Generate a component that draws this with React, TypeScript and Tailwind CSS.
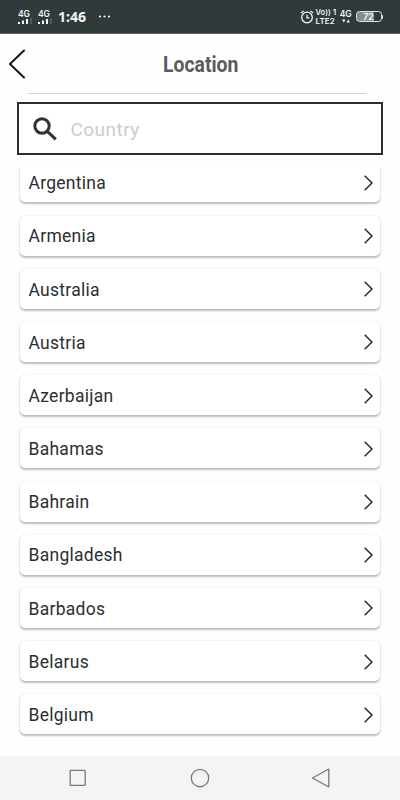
import { useState } from 'react'

const countries = [
  'Argentina',
  'Armenia',
  'Australia',
  'Austria',
  'Azerbaijan',
  'Bahamas',
  'Bahrain',
  'Bangladesh',
  'Barbados',
  'Belarus',
  'Belgium',
]

function Signal() {
  return (
    <div className="flex w-[16px] flex-col items-start">
      <span className="pl-[1px] font-[Inter,sans-serif] text-[8.5px] leading-[8px] font-semibold tracking-[-0.2px]">4G</span>
      <svg className="h-[6px] w-[16px]" viewBox="0 0 16 6" fill="currentColor">
        <rect x="1" y="4" width="2" height="2" />
        <rect x="5" y="2.5" width="2" height="3.5" />
        <rect x="9" y="1" width="2" height="5" />
        <rect x="13.2" y="0" width="1.6" height="6" fill="#596163" />
      </svg>
    </div>
  )
}

function StatusBar() {
  return (
    <div className="flex h-[34px] shrink-0 items-center border-b border-[#5c6366] bg-[#303a3b] pr-[17px] pl-[17px] text-[#f4f6f6]">
      <Signal />
      <div className="ml-[4px]">
        <Signal />
      </div>
      <span className="ml-[5px] w-[29px] font-['Noto_Sans',sans-serif] text-[14px] leading-none font-bold">
        1:46
      </span>
      <svg className="ml-[11px] h-[3px] w-[13px]" viewBox="0 0 13 3" fill="currentColor">
        <circle cx="2" cy="1.5" r="1.1" />
        <circle cx="6.5" cy="1.5" r="1.1" />
        <circle cx="11" cy="1.5" r="1.1" />
      </svg>

      <div className="ml-auto flex items-center font-[Inter,sans-serif] font-semibold">
        {/* Alarm */}
        <svg className="h-[14px] w-[14px]" viewBox="0 0 14 14" fill="none" stroke="currentColor" strokeWidth="1.3">
          <circle cx="7" cy="7.5" r="5.3" />
          <path d="M7 4.8v3h2.4M.8 3 3.6 1M13.2 3 10.4 1" />
        </svg>
        <div className="ml-[2px] flex w-[21px] flex-col whitespace-nowrap">
          <span className="text-[7.5px] leading-[8px] tracking-[0.1px]">Vo)) 1</span>
          <span className="text-[8px] leading-[8px] tracking-[0.1px]">LTE2</span>
        </div>
        <div className="ml-[3px] flex w-3 flex-col items-center">
          <span className="text-[8.5px] leading-[8px] tracking-[-0.2px]">4G</span>
          <svg className="mt-px h-[4px] w-2" viewBox="0 0 8 4" fill="currentColor">
            <path d="M0 .4h3.6L1.8 3.6zM4.4 3.6H8L6.2.4z" />
          </svg>
        </div>
        <div className="ml-[4px] flex h-[11px] w-[26px] items-center justify-center rounded-[3.5px] border border-[#dfe3e3] bg-linear-to-r from-[#848c8d] from-70% to-[#303a3b] to-70% pt-px text-[8.5px] leading-none font-bold">
          72
        </div>
        <div className="h-[4px] w-[1.5px] rounded-r-full bg-[#dfe3e3]" />
      </div>
    </div>
  )
}

function Header() {
  return (
    <div className="mx-[9px] flex h-[60px] shrink-0 items-center">
      <button aria-label="Back" className="w-4">
        <svg className="h-[30px] w-4" viewBox="0 0 16 30" fill="none" stroke="#151719" strokeWidth="2" strokeLinecap="round">
          <path d="M15 1.5.9 15 15 28.5" />
        </svg>
      </button>
      <h1 className="flex-1 scale-x-[0.86] pr-[17px] text-center text-[22.5px] leading-none font-bold text-[#5b5b5b]">
        Location
      </h1>
    </div>
  )
}

function CountryRow({ name }: { name: string }) {
  return (
    <li className="flex h-10 shrink-0 items-center rounded-[5px] bg-white pr-[7px] pl-[8.5px] shadow-[0_1.5px_2px_rgba(0,0,0,0.25),0_0_1.5px_rgba(0,0,0,0.12)]">
      <span className="flex-1 pt-[3px] text-[17.5px] leading-none tracking-[0.27px] text-[#2b2f31]">{name}</span>
      <svg className="mt-px h-4 w-[9px]" viewBox="0 0 9 16" fill="none" stroke="#202325" strokeWidth="1.4">
        <path d="M.7.8 8 8 .7 15.2" />
      </svg>
    </li>
  )
}

function NavBar() {
  return (
    <div className="flex h-[44px] shrink-0 items-center bg-[#f4f4f4] px-[68px]">
      <svg className="h-[20px] w-full" viewBox="0 0 264 20" fill="none" stroke="#77797a" strokeWidth="1.3" strokeLinejoin="round">
        <rect x="2.2" y="2.4" width="15" height="15" rx=".5" />
        <circle cx="132" cy="10" r="8.7" />
        <path d="M260.8 1 244.5 10l16.3 9z" />
      </svg>
    </div>
  )
}

export default function App() {
  const [query, setQuery] = useState('')
  const filtered = countries.filter((c) => c.toLowerCase().startsWith(query.toLowerCase()))

  return (
    <div className="flex h-[800px] w-[400px] flex-col overflow-hidden bg-[#fefefe] font-[Roboto,sans-serif]">
      <StatusBar />
      <Header />
      <div className="-mt-px mr-[33px] ml-7 h-px shrink-0 bg-[#d4d4d4]" />

      {/* Search */}
      <label className="mx-[17px] mt-2 flex h-[53px] shrink-0 items-center border-2 border-[#263033] bg-white pl-[14px]">
        <svg className="h-6 w-6" viewBox="0 0 24 24" fill="none" stroke="#2b3335" strokeWidth="3">
          <circle cx="9" cy="9" r="7.2" />
          <path d="m14 14.2 8.8 8.2" />
        </svg>
        <input
          type="text"
          placeholder="Country"
          value={query}
          onChange={(e) => setQuery(e.target.value)}
          className="ml-[13.5px] w-[260px] pt-[3px] text-[19px] tracking-[0.45px] outline-none placeholder:text-[#cccccc]"
        />
      </label>

      {/* Country list, scrolled slightly past its first row */}
      <div className="mt-3 min-h-0 flex-1 overflow-hidden px-5">
        <ul className="-mt-[4.6px] flex flex-col gap-[13.2px]">
          {filtered.map((name) => (
            <CountryRow key={name} name={name} />
          ))}
        </ul>
      </div>

      <NavBar />
    </div>
  )
}
